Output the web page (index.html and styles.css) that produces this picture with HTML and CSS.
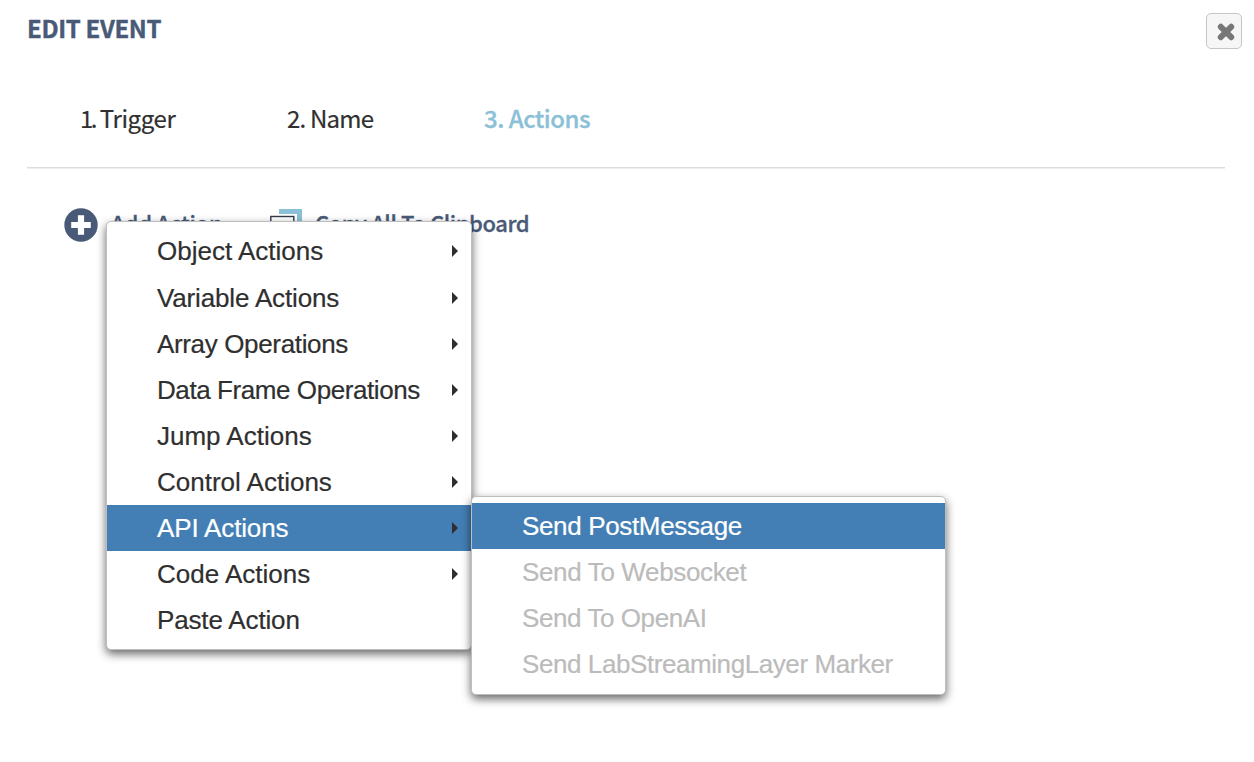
FILE: index.html
```html
<!DOCTYPE html>
<html lang="en">
<head>
  <meta charset="UTF-8">
  <title>Edit Event</title>
  <link rel="stylesheet" href="styles.css">
</head>
<body>
  <div class="dialog">
    <div class="dialog-header">
      <h2 class="dialog-title">EDIT EVENT</h2>
      <button class="close-button" aria-label="Close">
        <svg width="18" height="18" viewBox="0 0 18 18">
          <path d="M3.8 3.8 L14.2 14.2 M14.2 3.8 L3.8 14.2" stroke="#777" stroke-width="6" stroke-linecap="round"/>
        </svg>
      </button>
    </div>

    <div class="steps">
      <span class="step step-trigger"><span class="number">1.</span> Trigger</span>
      <span class="step step-name">2. Name</span>
      <span class="step step-actions active">3. Actions</span>
    </div>

    <div class="toolbar">
      <a class="tool">
        <svg class="add-icon" width="34" height="34" viewBox="0 0 34 34">
          <circle cx="17" cy="17" r="16.7" fill="#485a78"/>
          <path d="M17 7.2 V26.8 M7.2 17 H26.8" stroke="#fff" stroke-width="6.2"/>
        </svg>
        <span class="tool-label add-label">Add Action</span>
      </a>
      <a class="tool">
        <svg class="copy-icon" width="32" height="32" viewBox="0 0 32 32">
          <path d="M9 2.5 H29.5 V24" fill="none" stroke="#8bc0d7" stroke-width="5"/>
          <rect x="0" y="6" width="25" height="24" fill="#fff"/>
          <rect x="0.8" y="7.5" width="23" height="20" fill="#fff" stroke="#34384a" stroke-width="1.4"/>
        </svg>
        <span class="tool-label copy-label">Copy All To Clipboard</span>
      </a>
    </div>
  </div>

  <!-- Action menu -->
  <ul class="menu main-menu">
    <li class="item first">Object Actions<i class="arrow"></i></li>
    <li class="item snug">Variable Actions<i class="arrow"></i></li>
    <li class="item tight">Array Operations<i class="arrow"></i></li>
    <li class="item tighter">Data Frame Operations<i class="arrow"></i></li>
    <li class="item">Jump Actions<i class="arrow"></i></li>
    <li class="item">Control Actions<i class="arrow"></i></li>
    <li class="item selected snug">API Actions<i class="arrow"></i></li>
    <li class="item">Code Actions<i class="arrow"></i></li>
    <li class="item snug">Paste Action</li>
  </ul>

  <!-- API Actions submenu -->
  <ul class="menu sub-menu">
    <li class="item selected tight">Send PostMessage</li>
    <li class="item disabled tight">Send To Websocket</li>
    <li class="item disabled tighter">Send To OpenAI</li>
    <li class="item disabled tighter">Send LabStreamingLayer Marker</li>
  </ul>
</body>
</html>
```
FILE: styles.css
```css
* {
  box-sizing: border-box;
}
body {
  margin: 0;
  height: 762px;
  overflow: hidden;
  background: #fff;
  color: #2f2f2f;
  font-family: "Noto Sans CJK SC", "Noto Sans", sans-serif;
}
.dialog {
  padding: 13px 12px 0 27px;
}
.dialog-header {
  display: flex;
  justify-content: space-between;
  height: 36px;
}
.dialog-title {
  margin: 0;
  color: #485a78;
  font-size: 24px;
  font-weight: 700;
  letter-spacing: -0.35px;
  line-height: 29px;
  -webkit-text-stroke: 0.4px;
}
.close-button {
  display: flex;
  align-items: center;
  justify-content: center;
  width: 36px;
  height: 36px;
  padding: 1px 0 0 3px;
  border: 1px solid #c5c5c5;
  border-radius: 5px;
  background: #f6f6f6;
}
.steps {
  display: flex;
  height: 119px;
  margin-right: 17px;
  padding: 52px 0 0 53px;
  border-bottom: 1px solid #dcdcdc;
  box-shadow: 0 1px 0 #eee;
  font-size: 24px;
  line-height: 34px;
  white-space: nowrap;
}
.step {
  letter-spacing: -0.8px;
  -webkit-text-stroke: 0.2px;
}
.step-trigger {
  width: 207px;
  letter-spacing: -0.4px;
}
.number {
  letter-spacing: -2.6px;
}
.step-name {
  width: 197px;
}
.step.active {
  color: #8bc0d7;
  font-weight: 500;
  letter-spacing: -0.5px;
  -webkit-text-stroke: 0.3px;
}
.toolbar {
  display: flex;
  gap: 49px;
  padding: 40px 0 0 37px;
}
.tool {
  display: flex;
  align-items: center;
  height: 34px;
  color: #485a78;
  font-size: 22px;
  font-weight: 500;
  line-height: 28px;
  white-space: nowrap;
}
.tool-label {
  margin: 0 0 7px 13px;
  -webkit-text-stroke: 0.3px;
}
.add-label {
  width: 110px;
  letter-spacing: -0.2px;
}
.copy-label {
  letter-spacing: -0.45px;
}
.menu {
  position: absolute;
  margin: 0;
  padding: 6px 0;
  list-style: none;
  background: #fff;
  border: 1px solid #bebebe;
  border-radius: 5px;
  box-shadow: 0 4px 10px rgba(0, 0, 0, 0.6);
  font-family: "Liberation Sans", sans-serif;
  font-size: 26px;
  -webkit-text-stroke: 0.2px;
}
.main-menu {
  top: 221px;
  left: 106px;
  width: 366px;
}
.sub-menu {
  top: 496px;
  left: 471px;
  width: 475px;
  padding-bottom: 7px;
}
.item {
  display: flex;
  align-items: center;
  justify-content: space-between;
  height: 46px;
  padding: 0 13px 0 50px;
  white-space: nowrap;
}
.item.first {
  height: 47px;
  padding-bottom: 1px;
}
.item.selected {
  background: #437fb5;
  color: #fff;
}
.item.disabled {
  color: #bbb;
}
.snug {
  letter-spacing: -0.15px;
}
.tight {
  letter-spacing: -0.35px;
}
.tighter {
  letter-spacing: -0.42px;
}
.arrow {
  border-top: 6px solid transparent;
  border-bottom: 6px solid transparent;
  border-left: 6px solid #2f2f2f;
}
```
